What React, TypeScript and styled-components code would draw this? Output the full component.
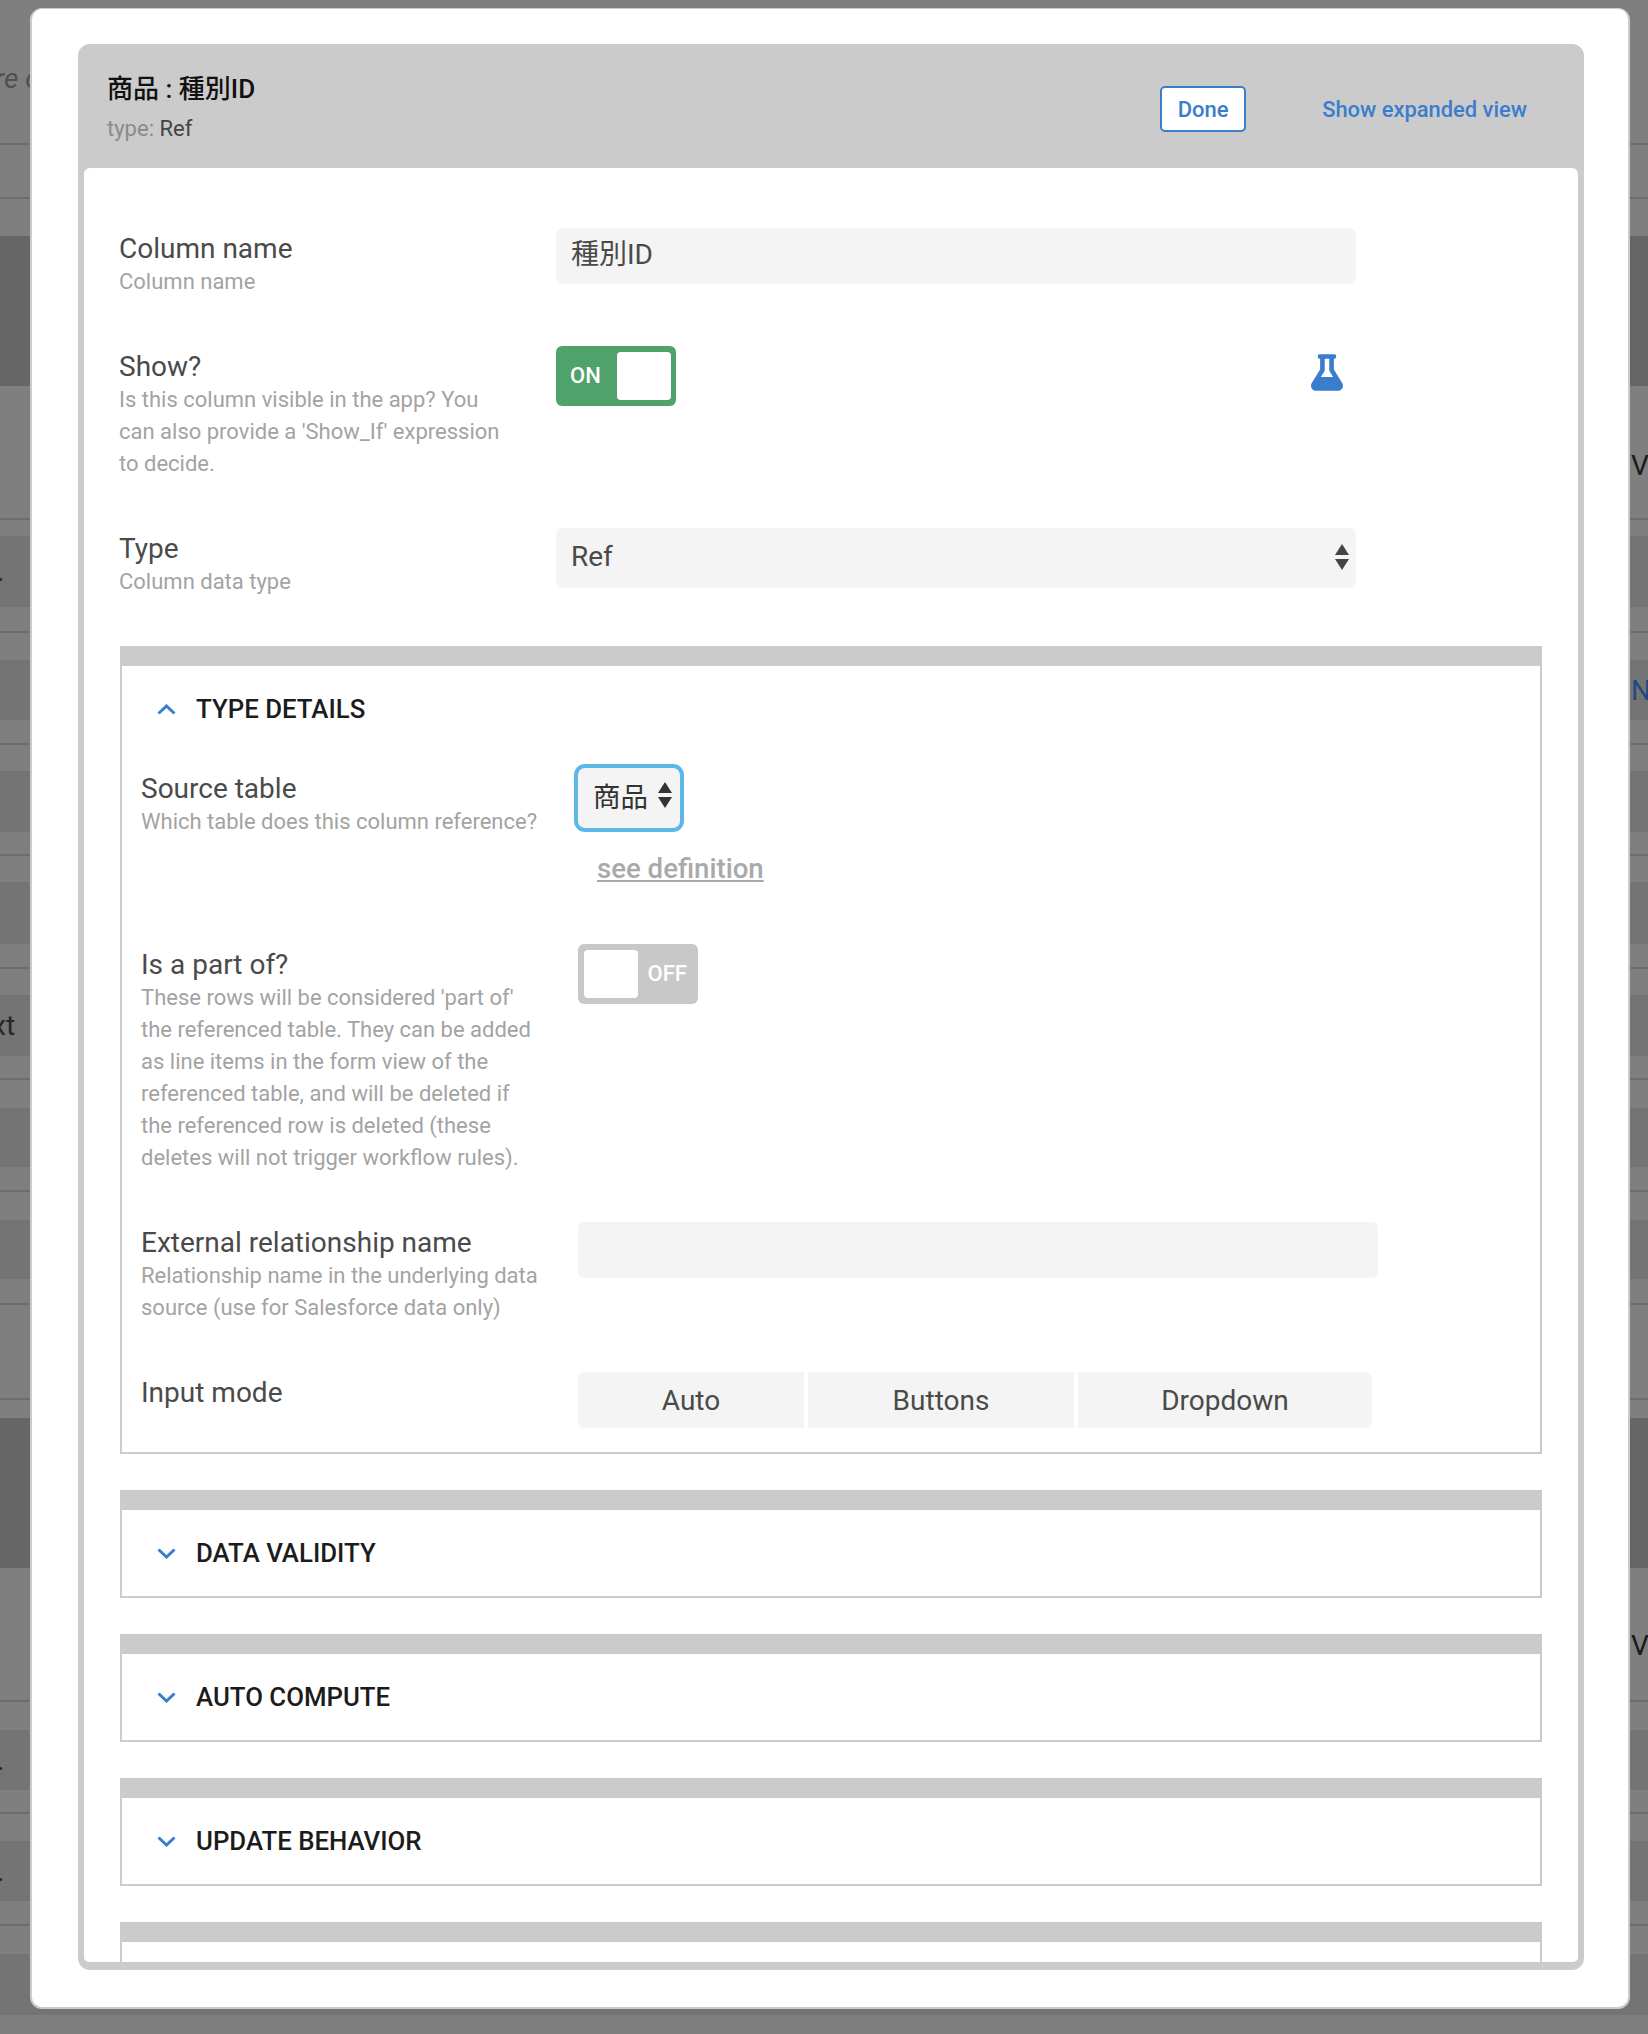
import React, { FC } from 'react';
import styled, { createGlobalStyle } from 'styled-components';
import { FaFlask } from 'react-icons/fa';

const BLUE = '#3a7dcc';
const RULE = '#cbcbcb';

type Tone = 'base' | 'band' | 'dark';

interface BackdropRowData {
  height: number;
  tone: Tone;
  line?: boolean;
  left?: string;
  offset?: number;
  right?: string;
  blue?: boolean;
  italic?: boolean;
}

// rows of the table sitting behind the dimmed overlay
const backdropRows: BackdropRowData[] = [
  { height: 60, tone: 'base' },
  { height: 36, tone: 'base', left: 're c', italic: true, offset: -5 },
  { height: 49, tone: 'base', line: true },
  { height: 54, tone: 'base', line: true },
  { height: 37, tone: 'base' },
  { height: 150, tone: 'dark' },
  { height: 59, tone: 'base' },
  { height: 40, tone: 'base', right: 'V' },
  { height: 35, tone: 'base', line: true },
  { height: 16, tone: 'base' },
  { height: 71, tone: 'band', left: '.', offset: -3 },
  { height: 26, tone: 'base', line: true },
  { height: 27, tone: 'base' },
  { height: 60, tone: 'band', right: 'N', blue: true },
  { height: 25, tone: 'base', line: true },
  { height: 26, tone: 'base' },
  { height: 61, tone: 'band' },
  { height: 24, tone: 'base', line: true },
  { height: 26, tone: 'base' },
  { height: 62, tone: 'band' },
  { height: 25, tone: 'base', line: true },
  { height: 26, tone: 'base' },
  { height: 61, tone: 'band', left: 'xt', offset: -8 },
  { height: 24, tone: 'base', line: true },
  { height: 28, tone: 'base' },
  { height: 59, tone: 'band' },
  { height: 25, tone: 'base', line: true },
  { height: 28, tone: 'base' },
  { height: 59, tone: 'band' },
  { height: 26, tone: 'base', line: true },
  { height: 95, tone: 'base', line: true },
  { height: 18, tone: 'base' },
  { height: 150, tone: 'dark' },
  { height: 57, tone: 'base' },
  { height: 40, tone: 'base', right: 'V' },
  { height: 37, tone: 'base', line: true },
  { height: 28, tone: 'base' },
  { height: 60, tone: 'band', left: '.', offset: -3 },
  { height: 24, tone: 'base', line: true },
  { height: 27, tone: 'base' },
  { height: 60, tone: 'band', left: '.', offset: -3 },
  { height: 25, tone: 'base', line: true },
  { height: 28, tone: 'base' },
  { height: 61, tone: 'band' },
  { height: 19, tone: 'base' },
];

const GlobalStyle = createGlobalStyle`
  html,
  body {
    margin: 0;
    background: #7f7f7f;
  }

  * {
    box-sizing: border-box;
  }

  body {
    font-family: Roboto, 'Noto Sans CJK JP', sans-serif;
    color: #444;
  }
`;

const Page = styled.div`
  position: relative;
  width: 1648px;
  height: 2034px;
  overflow: hidden;
`;

const Backdrop = styled.div`
  display: flex;
  flex-direction: column;
`;

const toneColors: Record<Tone, string> = {
  base: '#7f7f7f',
  band: '#747474',
  dark: '#666666',
};

const BackdropRow = styled.div<{ $height: number; $tone: Tone; $line?: boolean }>`
  display: grid;
  grid-template-columns: 1631px 1fr;
  align-items: center;
  height: ${(p) => p.$height}px;
  background: ${(p) => toneColors[p.$tone]};
  border-bottom: ${(p) => (p.$line ? '2px solid #6d6d6d' : 'none')};
  overflow: hidden;
  font-size: 28px;
`;

const BackdropLeft = styled.span<{ $italic?: boolean; $offset?: number }>`
  margin-left: ${(p) => p.$offset ?? 0}px;
  color: ${(p) => (p.$italic ? '#505050' : '#262626')};
  font-style: ${(p) => (p.$italic ? 'italic' : 'normal')};
`;

const BackdropRight = styled.span<{ $blue?: boolean }>`
  color: ${(p) => (p.$blue ? '#1f4a7f' : '#1a1a1a')};
  white-space: nowrap;
`;

const Modal = styled.div`
  position: absolute;
  top: 8px;
  left: 30px;
  width: 1600px;
  height: 2001px;
  padding: 35px 44px 37px 46px;
  background: #fff;
  border: 2px solid ${RULE};
  border-top-width: 1px;
  border-radius: 12px;
`;

const Panel = styled.div`
  display: flex;
  flex-direction: column;
  height: 100%;
  background: ${RULE};
  border: solid ${RULE};
  border-width: 0 6px 8px;
  border-radius: 12px;
  overflow: hidden;
`;

const PanelHeader = styled.header`
  flex: none;
  display: flex;
  align-items: center;
  justify-content: space-between;
  height: 124px;
  padding: 6px 51px 0 23px;
`;

const TitleBlock = styled.div`
  display: flex;
  flex-direction: column;
  gap: 10px;
`;

const Title = styled.div`
  font-size: 26px;
  line-height: 30px;
  font-weight: 500;
  color: #111;
`;

const TypeNote = styled.div`
  font-size: 22px;
  line-height: 30px;
  color: #8a8a8a;

  b {
    font-weight: 400;
    color: #444;
  }
`;

const HeaderActions = styled.div`
  display: flex;
  align-items: center;
  gap: 76px;
`;

const DoneButton = styled.button`
  width: 86px;
  height: 46px;
  padding: 0;
  font: 500 22px Roboto, sans-serif;
  color: ${BLUE};
  background: #fff;
  border: 2px solid ${BLUE};
  border-radius: 5px;
`;

const ExpandLink = styled.a`
  font-size: 21.9px;
  font-weight: 500;
  color: ${BLUE};
`;

const PanelBody = styled.div`
  flex: 1;
  min-height: 0;
  display: flex;
  flex-direction: column;
  gap: 48px;
  padding: 60px 36px 0 35px;
  background: #fff;
  border-radius: 6px 6px 0 0;
  overflow: hidden;
`;

const Row = styled.div`
  display: grid;
  grid-template-columns: 437px 1fr;
`;

const LabelBlock = styled.div`
  padding-top: 3px;
`;

const Label = styled.div`
  font-size: 28px;
  line-height: 35px;
  color: #4a4a4a;
`;

const Help = styled.div`
  max-width: 398px;
  font-size: 22px;
  line-height: 32px;
  color: #a3a3a3;
`;

const Field = styled.div`
  display: flex;
  align-items: center;
  justify-content: space-between;
  width: 800px;
  height: 56px;
  padding: 0 7px 3px 15px;
  font-size: 28px;
  color: #4a4a4a;
  background: #f4f4f4;
  border-radius: 6px;
`;

// the CJK font sits lower in its line box than Roboto
const NameField = styled(Field)`
  padding-bottom: 8px;
`;

const SelectField = styled(Field)`
  height: 60px;
`;

const FocusedSelect = styled.div`
  display: flex;
  align-items: center;
  gap: 10px;
  width: 102px;
  height: 60px;
  padding: 0 0 6px 15px;
  font-size: 27.5px;
  color: #333;
  background: #f4f4f4;
  border-radius: 7px;
  box-shadow: 0 0 0 4px #5bb7e6;
`;

const ToggleControl = styled.div`
  display: flex;
  align-items: flex-start;
  justify-content: space-between;
  width: 800px;
  padding-right: 13px;
`;

const Switch = styled.div<{ $on?: boolean }>`
  display: flex;
  flex-direction: ${(p) => (p.$on ? 'row' : 'row-reverse')};
  align-items: center;
  justify-content: space-between;
  width: 120px;
  height: 60px;
  padding: ${(p) => (p.$on ? '0 5px 0 14px' : '0 11px 0 6px')};
  font-size: 22px;
  font-weight: 500;
  color: #fff;
  background: ${(p) => (p.$on ? '#4fa26c' : '#c8c8c8')};
  border-radius: 6px;
`;

const SwitchText = styled.span`
  margin-bottom: 2px;
`;

const Knob = styled.span`
  width: 54px;
  height: 48px;
  background: #fff;
  border-radius: 4px;
`;

const Flask = styled(FaFlask)`
  width: 32px;
  height: 37px;
  margin-top: 8px;
  color: ${BLUE};
`;

const SectionStack = styled.div`
  flex: none;
  display: flex;
  flex-direction: column;
  gap: 36px;
  margin-left: 1px;
`;

const Section = styled.section`
  flex: none;
  background: #fff;
  border: 2px solid ${RULE};
  border-top-width: 20px;
`;

const SectionHeader = styled.div`
  display: flex;
  align-items: center;
  gap: 20px;
  height: 86px;
  padding-left: 35px;
  font-size: 25.8px;
  font-weight: 500;
  color: #1c1c1c;
`;

const SectionRows = styled.div`
  display: flex;
  flex-direction: column;
  gap: 48px;
  padding: 16px 0 24px 19px;
`;

const SectionRow = styled.div`
  display: grid;
  grid-template-columns: 437px 1fr;
`;

const SourceControl = styled.div`
  display: flex;
  flex-direction: column;
  align-items: flex-start;
  padding-bottom: 10px;
`;

const DefinitionLink = styled.a`
  margin: 24px 0 0 19px;
  font-size: 27.6px;
  line-height: 34px;
  font-weight: 500;
  color: #a9a9a9;
  text-decoration: underline;
`;

const ModeGroup = styled.div`
  display: grid;
  grid-template-columns: 226px 266px 294px;
  column-gap: 4px;
  height: 56px;
`;

const ModeOption = styled.div`
  display: flex;
  align-items: center;
  justify-content: center;
  font-size: 28px;
  color: #4a4a4a;
  background: #f4f4f4;

  &:first-child {
    border-radius: 6px 0 0 6px;
  }

  &:last-child {
    border-radius: 0 6px 6px 0;
  }
`;

const Chevron: FC<{ up?: boolean }> = ({ up }) => (
  <svg width="19" height="11" viewBox="0 0 19 11" fill="none">
    <path d={up ? 'M1.5 9.5 9.5 2l8 7.5' : 'M1.5 1.5 9.5 9l8-7.5'} stroke={BLUE} strokeWidth="3" />
  </svg>
);

const UpDownArrows: FC<{ color?: string }> = ({ color = '#444' }) => (
  <svg width="14" height="26" viewBox="0 0 14 26" fill={color}>
    <path d="M7 0l7 11H0z" />
    <path d="M7 26L0 15h14z" />
  </svg>
);

const ClosedSection: FC<{ title?: string }> = ({ title }) => (
  <Section>
    <SectionHeader>
      {title && <Chevron />}
      {title}
    </SectionHeader>
  </Section>
);

export default function App() {
  return (
    <Page lang="ja">
      <GlobalStyle />
      <Backdrop>
        {backdropRows.map((row, i) => (
          <BackdropRow key={i} $height={row.height} $tone={row.tone} $line={row.line}>
            <BackdropLeft $italic={row.italic} $offset={row.offset}>
              {row.left}
            </BackdropLeft>
            <BackdropRight $blue={row.blue}>{row.right}</BackdropRight>
          </BackdropRow>
        ))}
      </Backdrop>

      <Modal>
        <Panel>
          <PanelHeader>
            <TitleBlock>
              <Title>商品 : 種別ID</Title>
              <TypeNote>
                type: <b>Ref</b>
              </TypeNote>
            </TitleBlock>
            <HeaderActions>
              <DoneButton>Done</DoneButton>
              <ExpandLink>Show expanded view</ExpandLink>
            </HeaderActions>
          </PanelHeader>

          <PanelBody>
            <Row>
              <LabelBlock>
                <Label>Column name</Label>
                <Help>Column name</Help>
              </LabelBlock>
              <NameField>種別ID</NameField>
            </Row>

            <Row>
              <LabelBlock>
                <Label>Show?</Label>
                <Help>Is this column visible in the app? You can also provide a 'Show_If' expression to decide.</Help>
              </LabelBlock>
              <ToggleControl>
                <Switch $on>
                  <SwitchText>ON</SwitchText>
                  <Knob />
                </Switch>
                <Flask />
              </ToggleControl>
            </Row>

            <Row>
              <LabelBlock>
                <Label>Type</Label>
                <Help>Column data type</Help>
              </LabelBlock>
              <SelectField>
                Ref
                <UpDownArrows />
              </SelectField>
            </Row>

            <SectionStack>
              <Section>
                <SectionHeader>
                  <Chevron up />
                  TYPE DETAILS
                </SectionHeader>
                <SectionRows>
                  <SectionRow>
                    <LabelBlock>
                      <Label>Source table</Label>
                      <Help>Which table does this column reference?</Help>
                    </LabelBlock>
                    <SourceControl>
                      <FocusedSelect>
                        商品
                        <UpDownArrows color="#333" />
                      </FocusedSelect>
                      <DefinitionLink>see definition</DefinitionLink>
                    </SourceControl>
                  </SectionRow>

                  <SectionRow>
                    <LabelBlock>
                      <Label>Is a part of?</Label>
                      <Help>
                        These rows will be considered 'part of' the referenced table. They can be added as line items in
                        the form view of the referenced table, and will be deleted if the referenced row is deleted
                        (these deletes will not trigger workflow rules).
                      </Help>
                    </LabelBlock>
                    <div>
                      <Switch>
                        <SwitchText>OFF</SwitchText>
                        <Knob />
                      </Switch>
                    </div>
                  </SectionRow>

                  <SectionRow>
                    <LabelBlock>
                      <Label>External relationship name</Label>
                      <Help>Relationship name in the underlying data source (use for Salesforce data only)</Help>
                    </LabelBlock>
                    <Field />
                  </SectionRow>

                  <SectionRow>
                    <LabelBlock>
                      <Label>Input mode</Label>
                    </LabelBlock>
                    <ModeGroup>
                      <ModeOption>Auto</ModeOption>
                      <ModeOption>Buttons</ModeOption>
                      <ModeOption>Dropdown</ModeOption>
                    </ModeGroup>
                  </SectionRow>
                </SectionRows>
              </Section>

              <ClosedSection title="DATA VALIDITY" />
              <ClosedSection title="AUTO COMPUTE" />
              <ClosedSection title="UPDATE BEHAVIOR" />
              <ClosedSection />
            </SectionStack>
          </PanelBody>
        </Panel>
      </Modal>
    </Page>
  );
}
